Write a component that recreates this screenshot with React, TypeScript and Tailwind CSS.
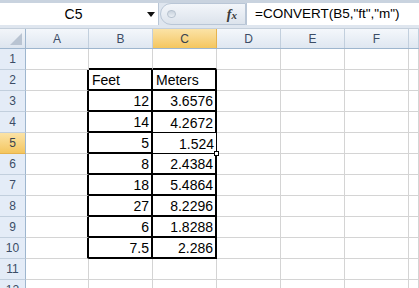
const cols = ["A", "B", "C", "D", "E", "F", ""];
const widths = ["w-[63px]", "w-[64px]", "w-[64px]", "w-[64px]", "w-[64px]", "w-[64px]", "w-[10px]"];

const data: Record<number, [string, string]> = {
  2: ["Feet", "Meters"],
  3: ["12", "3.6576"],
  4: ["14", "4.2672"],
  5: ["5", "1.524"],
  6: ["8", "2.4384"],
  7: ["18", "5.4864"],
  8: ["27", "8.2296"],
  9: ["6", "1.8288"],
  10: ["7.5", "2.286"],
};

function Cell({ row, col }: { row: number; col: number }) {
  const inTable = row >= 2 && row <= 10 && (col === 1 || col === 2);
  const sel = row === 5 && col === 2;
  let cls = "border-r border-b border-[#d4d4d4]";
  if (inTable) cls = "border-r-2 border-b-2 border-black";
  if (row === 4 && col === 2) cls = "border-r-2 border-b border-black";
  if (sel) cls = "border-r border-b border-black relative";
  if (col === 0 && row >= 2 && row <= 10) cls = "border-r-2 border-b border-r-black border-b-[#d4d4d4]";
  if (row === 1 && (col === 1 || col === 2)) cls = "border-r border-b-2 border-r-[#d4d4d4] border-b-black";

  const v = data[row];
  let text = "";
  if (v && col === 1) text = v[0];
  if (v && col === 2) text = v[1];
  const right = row !== 2;

  return (
    <div
      className={`${widths[col]} h-full shrink-0 flex items-end pb-[1px] ${right ? "justify-end pr-[2px]" : "justify-start pl-[3px]"} ${cls}`}
    >
      <span className="text-[14px] leading-[16px] text-black">{text}</span>
      {sel && (
        <div className="absolute -right-[3px] -bottom-[3px] w-[5px] h-[5px] bg-white border border-black" />
      )}
    </div>
  );
}

export default function App() {
  const rows = [1, 2, 3, 4, 5, 6, 7, 8, 9, 10, 11, 12];
  return (
    <div className="w-[419px] h-[288px] overflow-hidden bg-white font-['Liberation_Sans',Arial,sans-serif]">
      {/* formula bar */}
      <div className="h-[29px] flex items-stretch bg-[#dfe6ef] border-t-[3px] border-[#c9d3df] pb-[3px] border-b border-b-[#c4cfdb]">
        <div className="w-[159px] bg-white flex items-center border-r border-[#b9c6d6]">
          <div className="flex-1 text-center text-[14px] text-black pl-[3px]">C5</div>
          <div className="w-[14px] flex items-center justify-center">
            <svg width="8" height="5" viewBox="0 0 8 5">
              <path d="M0 0 L8 0 L4 5 Z" fill="#111" />
            </svg>
          </div>
        </div>
        <div className="w-[86px] ml-[1px] flex items-center rounded-l-full bg-gradient-to-b from-[#f3f6fa] to-[#dce3ec] border border-[#b9c6d6]">
          <div className="ml-[6px] w-[9px] h-[8px] rounded-full bg-gradient-to-b from-[#c8d2dd] to-[#e9eef4] border border-[#b6c2cf]" />
          <div className="flex-1" />
          <span className="mr-[8px] font-['Liberation_Serif',serif] italic font-bold text-[14px] text-[#3a3a3a]">
            f<span className="text-[11px]">x</span>
          </span>
        </div>
        <div className="flex-1 bg-white flex items-center pl-[8px] border-l border-[#b9c6d6] text-[13.5px] text-black whitespace-nowrap">
          =CONVERT(B5,"ft","m")
        </div>
      </div>

      {/* column headers */}
      <div className="h-[20px] flex border-b border-[#9eb6ce]">
        <div className="w-[26px] shrink-0 bg-gradient-to-b from-[#f2f5f9] to-[#dde5ef] border-r border-[#9eb6ce] flex items-end justify-end p-[3px]">
          <svg width="12" height="12" viewBox="0 0 12 12">
            <path d="M12 0 L12 12 L0 12 Z" fill="#b9c4d2" />
          </svg>
        </div>
        {cols.map((c, i) => (
          <div
            key={i}
            className={`${widths[i]} shrink-0 flex items-center justify-center text-[12px] border-r ${
              c === "C"
                ? "bg-gradient-to-b from-[#fbe3a6] to-[#f4c65e] border-[#e6b34e] text-[#38424f]"
                : "bg-gradient-to-b from-[#f4f7fb] to-[#dfe7f1] border-[#c2cfdd] text-[#3b4c66]"
            }`}
          >
            {c}
          </div>
        ))}
      </div>

      {/* rows */}
      {rows.map((r) => (
        <div key={r} className="h-[21px] flex">
          <div
            className={`w-[26px] shrink-0 flex items-center justify-center text-[12px] border-r border-b ${
              r === 5
                ? "bg-gradient-to-b from-[#fbe3a6] to-[#f4c65e] border-r-[#9eb6ce] border-b-[#e6b34e] text-[#38424f]"
                : "bg-[#e4ecf7] border-r-[#9eb6ce] border-b-[#c2cfdd] text-[#3b4c66]"
            }`}
          >
            {r}
          </div>
          {cols.map((_, i) => (
            <Cell key={i} row={r} col={i} />
          ))}
        </div>
      ))}
    </div>
  );
}
